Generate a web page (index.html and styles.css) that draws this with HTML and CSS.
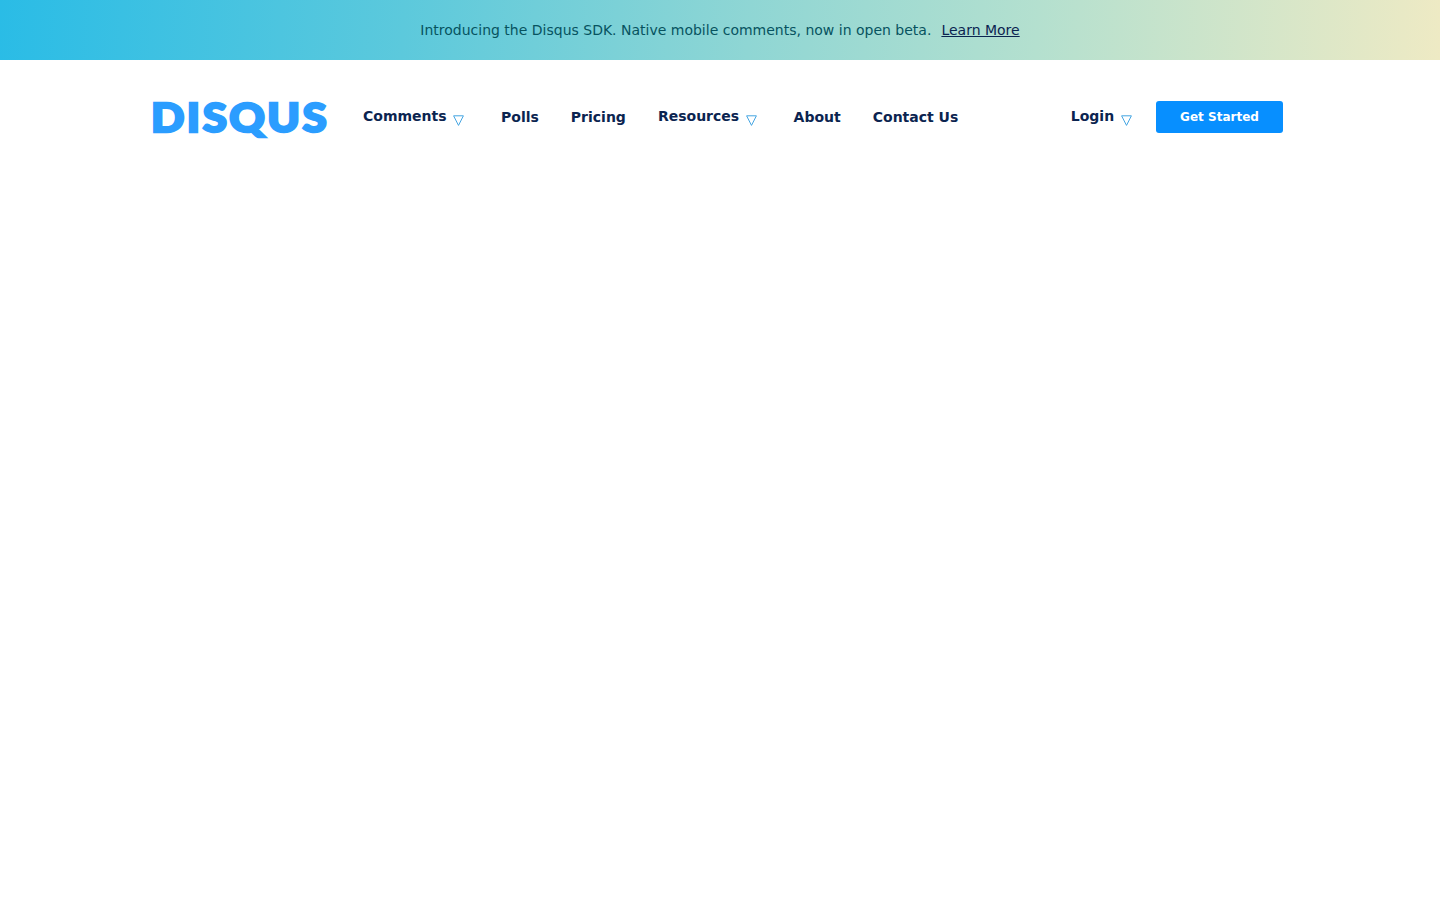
FILE: index.html
```html
<!DOCTYPE html>
<html lang="en">
<head>
    <meta charset="UTF-8">
    <meta name="viewport" content="width=device-width, initial-scale=1.0">
    <title>Disqus</title>
    <link rel="stylesheet" href="styles.css">
</head>
<body>
    <div class="banner">
        <span>Introducing the Disqus SDK. Native mobile comments, now in open beta.</span>
        <a class="banner-link" href="#">Learn More</a>
    </div>

    <header class="header">
        <a class="logo" href="#"><span class="logo-text">DISQUS</span></a>
        <nav class="nav">
            <a class="nav-item has-menu" href="#">Comments <svg class="arrow" viewBox="0 0 11 11"><path d="M.6.8h9.8L5.5 10.4z"/></svg></a>
            <a class="nav-item" href="#">Polls</a>
            <a class="nav-item" href="#">Pricing</a>
            <a class="nav-item has-menu" href="#">Resources <svg class="arrow" viewBox="0 0 11 11"><path d="M.6.8h9.8L5.5 10.4z"/></svg></a>
            <a class="nav-item" href="#">About</a>
            <a class="nav-item" href="#">Contact Us</a>
        </nav>
        <div class="account">
            <a class="nav-item has-menu" href="#">Login <svg class="arrow" viewBox="0 0 11 11"><path d="M.6.8h9.8L5.5 10.4z"/></svg></a>
            <a class="btn-start" href="#">Get Started</a>
        </div>
    </header>
</body>
</html>
```

FILE: styles.css
```css
body {
    margin: 0;
    background: #fff;
    font-family: "DejaVu Sans", sans-serif;
    color: #0b2450;
}

a {
    color: inherit;
    text-decoration: none;
}

.banner {
    height: 60px;
    display: flex;
    justify-content: center;
    align-items: center;
    gap: 10px;
    font-size: 14px;
    color: #07535f;
    background: linear-gradient(93deg, #2abce6 0%, #5cc9dc 28%, #8fd6d4 52%, #b4e0cf 72%, #eeeac4 100%);
}

.banner-link {
    color: #0b2450;
    text-decoration: underline;
}

.header {
    width: 1132px;
    height: 114px;
    margin-left: 151px;
    display: flex;
    align-items: center;
}

.logo {
    width: 212px;
    font-family: "Lato", sans-serif;
    font-size: 39px;
    font-weight: 900;
    color: #2b9dff;
}

.logo-text {
    display: inline-block;
    letter-spacing: 2.2px;
    -webkit-text-stroke: 2.4px #2b9dff;
    transform: scaleX(1.125);
    transform-origin: left center;
}

.nav {
    display: flex;
    align-items: center;
    gap: 32px;
}

.nav-item {
    font-size: 14px;
    font-weight: 700;
    white-space: nowrap;
}

.nav .has-menu {
    margin-right: 4.6px;
}

.has-menu {
    margin-right: 3px;
    padding-bottom: 1px;
}

.arrow {
    width: 11px;
    height: 11px;
    margin-left: 2px;
    vertical-align: -5px;
    fill: none;
    stroke: #45a5e2;
    stroke-width: 1;
}

.account {
    margin-left: auto;
    display: flex;
    align-items: center;
    gap: 21px;
}

.btn-start {
    width: 127px;
    height: 32px;
    display: flex;
    justify-content: center;
    align-items: center;
    border-radius: 3px;
    background: #078fff;
    color: #fff;
    font-size: 12px;
    font-weight: 700;
}
```
